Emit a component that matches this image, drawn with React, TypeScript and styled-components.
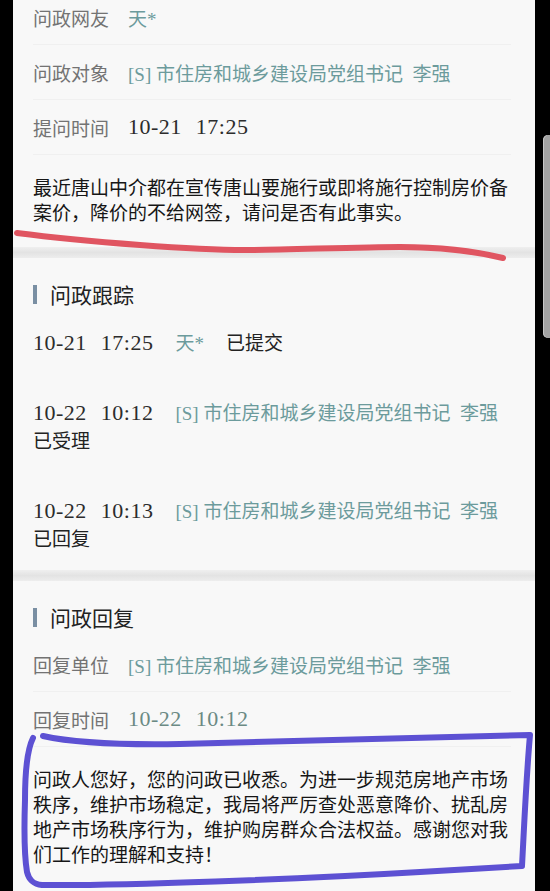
import React from 'react';
import styled, { createGlobalStyle } from 'styled-components';

const GlobalStyle = createGlobalStyle`
  *, *::before, *::after {
    box-sizing: border-box;
  }
  html, body {
    margin: 0;
    padding: 0;
    background: #000;
  }
  body {
    font-family: 'Liberation Serif', 'Noto Sans CJK SC', serif;
  }
`;

const TARGET = '[S] 市住房和城乡建设局党组书记\u00a0\u00a0李强';

const tracks = [
  { date: '10-21', time: '17:25', who: '天*', status: '已提交' },
  { date: '10-22', time: '10:12', who: TARGET, status: '已受理' },
  { date: '10-22', time: '10:13', who: TARGET, status: '已回复' },
];

const Time: React.FC<{ date: string; time: string; tone?: 'dark' | 'muted' }> = ({
  date,
  time,
  tone = 'dark',
}) => (
  <StyledTime $tone={tone}>
    <span>{date}</span>
    <span>{time}</span>
  </StyledTime>
);

const App: React.FC = () => {
  return (
    <>
      <GlobalStyle />
      <Frame>
        <Bezel />
        <Screen>
          <Content>
            <Section>
              <MetaRow>
                <Label>问政网友</Label>
                <Value>天*</Value>
              </MetaRow>
              <MetaRow>
                <Label>问政对象</Label>
                <Value>{TARGET}</Value>
              </MetaRow>
              <MetaRow>
                <Label>提问时间</Label>
                <Time date="10-21" time="17:25" />
              </MetaRow>
              <Paragraph>
                最近唐山中介都在宣传唐山要施行或即将施行控制房价备案价，降价的不给网签，请问是否有此事实。
              </Paragraph>
            </Section>

            <Band />

            <Section>
              <SectionTitle>问政跟踪</SectionTitle>
              {tracks.map((t) => (
                <TrackItem key={t.time}>
                  <Time date={t.date} time={t.time} />
                  <Value>{t.who}</Value>
                  <Status>{t.status}</Status>
                </TrackItem>
              ))}
            </Section>

            <Band />

            <Section>
              <SectionTitle>问政回复</SectionTitle>
              <MetaRow>
                <Label>回复单位</Label>
                <Value>{TARGET}</Value>
              </MetaRow>
              <MetaRow>
                <Label>回复时间</Label>
                <Time date="10-22" time="10:12" tone="muted" />
              </MetaRow>
              <Paragraph>
                问政人您好，您的问政已收悉。为进一步规范房地产市场秩序，维护市场稳定，我局将严厉查处恶意降价、扰乱房地产市场秩序行为，维护购房群众合法权益。感谢您对我们工作的理解和支持！
              </Paragraph>
            </Section>
          </Content>
        </Screen>
        <Bezel>
          <ScrollPill />
        </Bezel>

        {/* hand-drawn marks on top of the screenshot */}
        <Annotations viewBox="0 0 550 891">
          <path
            d="M17 233 C40 236 100 242 140 245 S 210 250 245 250 S 360 247 400 247 S 470 250 503 258"
            stroke="#e05561"
            strokeWidth="6"
            fill="none"
            strokeLinecap="round"
          />
          <path
            d="M33 738 C27 750 25 770 25 800 C24 830 25 860 27 872 C29 880 33 884 42 885 C120 886 300 879 420 872 L522 866 C524 830 526 780 530 735 C420 737 300 740 180 744 C120 745 70 742 43 736"
            stroke="#5d51d3"
            strokeWidth="6"
            fill="none"
            strokeLinecap="round"
            strokeLinejoin="round"
          />
        </Annotations>
      </Frame>
    </>
  );
};

const Frame = styled.div`
  position: relative;
  width: 550px;
  height: 891px;
  overflow: hidden;
  display: grid;
  grid-template-columns: 13px 522px 15px;
  background: #000;
`;

const Bezel = styled.div`
  background: #000;
`;

const ScrollPill = styled.div`
  margin: 135px 0 0 8px;
  width: 7px;
  height: 203px;
  background: #a2a2a2;
  border-radius: 5px 0 0 5px;
  box-shadow: inset 1px 0 0 #c6c6c6;
`;

const Screen = styled.main`
  background: #f8f8f8;
  overflow: hidden;
`;

const Content = styled.div`
  margin-top: -10px;
`;

const Section = styled.section`
  padding: 0 24px 0 20px;
`;

const Band = styled.div`
  height: 11px;
  background: linear-gradient(#efefef, #e3e3e3 50%, #ededed);
`;

const MetaRow = styled.div`
  display: flex;
  align-items: center;
  gap: 19px;
  height: 55px;
  border-bottom: 1px solid #f0f0f0;
  font-size: 19px;
`;

const Label = styled.span`
  flex: none;
  color: #737373;
`;

const Value = styled.span`
  white-space: nowrap;
  color: #6c9b9c;
  font-size: 19px;
`;

const StyledTime = styled.span<{ $tone: 'dark' | 'muted' }>`
  display: inline-flex;
  gap: 14px;
  font-size: 22px;
  letter-spacing: 0.5px;
  white-space: nowrap;
  color: ${(p) => (p.$tone === 'muted' ? '#6b8a84' : '#2c2c2c')};
`;

const Paragraph = styled.p`
  margin: 0;
  padding: 21px 0;
  font-size: 19px;
  line-height: 25px;
  color: #161616;
`;

const SectionTitle = styled.h3`
  display: flex;
  align-items: center;
  gap: 13px;
  height: 24px;
  margin: 24px 0 8px;
  font-size: 21px;
  font-weight: 400;
  color: #222;

  &::before {
    content: '';
    width: 4px;
    height: 19px;
    background: #7a8fa3;
  }
`;

const TrackItem = styled.div`
  display: flex;
  flex-wrap: wrap;
  align-items: baseline;
  column-gap: 22px;
  padding: 15px 0 26px;
  line-height: 28px;
  font-size: 19px;

  &:last-child {
    padding-bottom: 16px;
  }
`;

const Status = styled.span`
  color: #222;
`;

const Annotations = styled.svg`
  position: absolute;
  left: 0;
  top: 0;
  width: 550px;
  height: 891px;
  pointer-events: none;
`;

export default App;
